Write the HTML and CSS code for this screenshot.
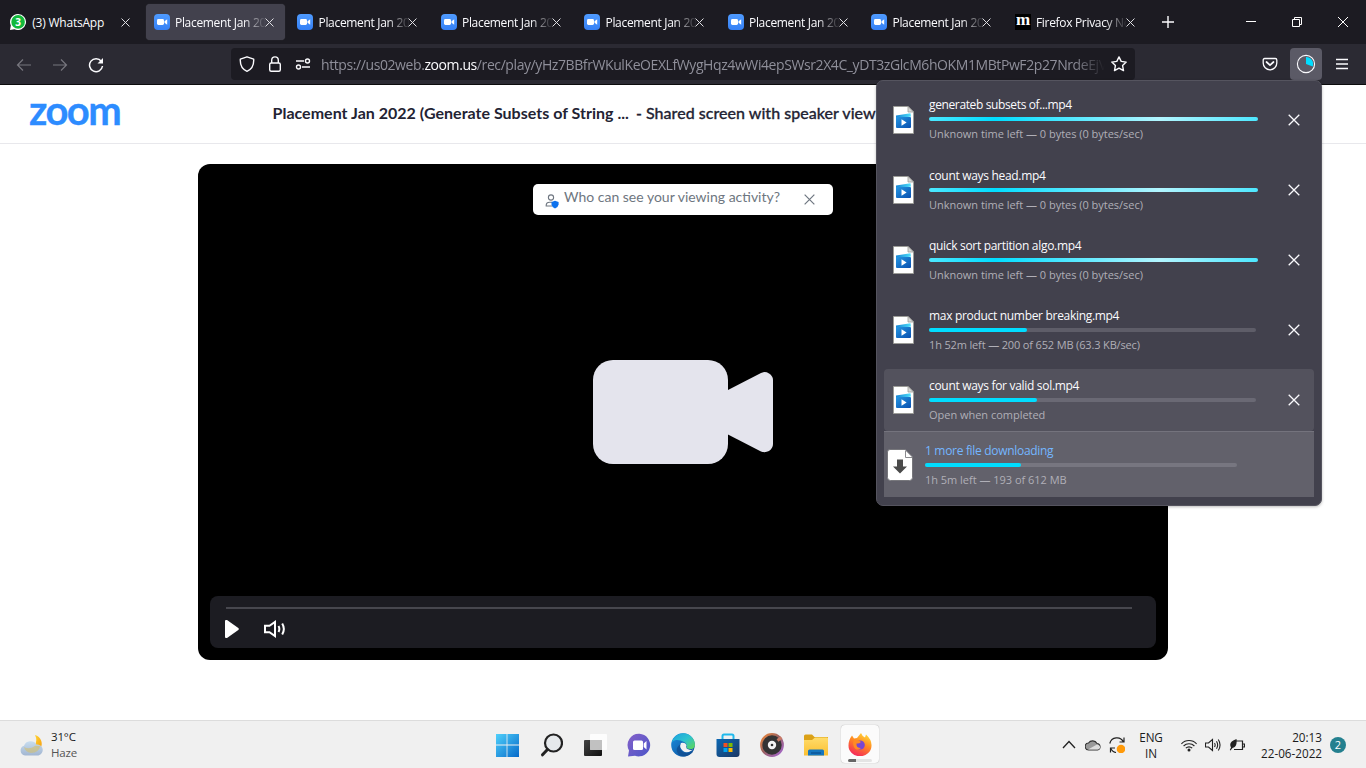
FILE: index.html
```
<!DOCTYPE html>
<html lang="en">
<head>
<meta charset="utf-8">
<title>Placement Jan 2022 - Zoom</title>
<link rel="stylesheet" href="styles.css">
</head>
<body>
<svg class="defs" width="0" height="0">
  <defs>
    <linearGradient id="gZoom" x1="0" y1="0" x2="0" y2="1"><stop offset="0" stop-color="#4f9bff"/><stop offset="1" stop-color="#3580f5"/></linearGradient>
    <linearGradient id="gWin" x1="0" y1="0" x2="1" y2="1"><stop offset="0" stop-color="#4fd0fb"/><stop offset="1" stop-color="#0669c9"/></linearGradient>
    <linearGradient id="gFilm" x1="0" y1="0" x2="1" y2="1"><stop offset="0" stop-color="#2496e3"/><stop offset="1" stop-color="#0a4fae"/></linearGradient>
    <linearGradient id="gClap" x1="0" y1="0" x2="1" y2="0"><stop offset="0" stop-color="#1583d3"/><stop offset="1" stop-color="#4fe0fb"/></linearGradient>
    <linearGradient id="gDark" x1="0" y1="0" x2="1" y2="1"><stop offset="0" stop-color="#444"/><stop offset="1" stop-color="#111"/></linearGradient>
    <linearGradient id="gChat" x1="0" y1="0" x2="1" y2="1"><stop offset="0" stop-color="#8561c9"/><stop offset="1" stop-color="#4b55c8"/></linearGradient>
    <linearGradient id="gEdgeTop" x1="0" y1="0" x2="1" y2="1"><stop offset="0" stop-color="#1c9fe0"/><stop offset=".5" stop-color="#2dc3cf"/><stop offset="1" stop-color="#62d84e"/></linearGradient>
    <linearGradient id="gEdgeLow" x1="0" y1="0" x2="1" y2="1"><stop offset="0" stop-color="#1b8ee0"/><stop offset="1" stop-color="#0b4a94"/></linearGradient>
    <linearGradient id="gStore" x1="0" y1="0" x2="1" y2="1"><stop offset="0" stop-color="#0b68b4"/><stop offset="1" stop-color="#1c3763"/></linearGradient>
    <linearGradient id="gDisc" x1="0" y1="0" x2="1" y2="1"><stop offset="0" stop-color="#f08a3c"/><stop offset=".45" stop-color="#9a615f"/><stop offset="1" stop-color="#a568d8"/></linearGradient>
    <linearGradient id="gFold" x1="0" y1="0" x2="0" y2="1"><stop offset="0" stop-color="#ffdc6b"/><stop offset="1" stop-color="#fbbf31"/></linearGradient>
    <linearGradient id="gFox" x1=".8" y1="0" x2=".3" y2="1"><stop offset="0" stop-color="#ffe03a"/><stop offset=".45" stop-color="#ff8a22"/><stop offset="1" stop-color="#f5245c"/></linearGradient>
    <linearGradient id="gMoon" x1="0" y1="0" x2="1" y2="1"><stop offset="0" stop-color="#ffd83a"/><stop offset="1" stop-color="#f79d0c"/></linearGradient>
    <linearGradient id="gHaze" x1="0" y1="0" x2="0" y2="1"><stop offset="0" stop-color="#c5dcf0"/><stop offset="1" stop-color="#9db2cf"/></linearGradient>
    <symbol id="fav" viewBox="0 0 16 16"><rect width="16" height="16" rx="4" fill="url(#gZoom)"/><rect x="3" y="5" width="7" height="6" rx="1.4" fill="#fff"/><path d="M10.5 7.2 13.2 5.3V10.7L10.5 8.8Z" fill="#fff"/></symbol>
    <symbol id="x" viewBox="0 0 12 12"><path d="M.7.7 11.3 11.3M11.3.7.7 11.3" stroke="currentColor" stroke-width="1.3" fill="none"/></symbol>
    <symbol id="file" viewBox="0 0 21 28">
      <path d="M.5.5H15L20.5 6V27.5H.5Z" fill="#fff" stroke="#9c9c98"/><path d="M15 .5V6H20.5Z" fill="#d8d8d6" stroke="#9c9c98" stroke-width=".8"/>
      <path d="M3 9.5 17.5 7.2 18 10.5 3 13Z" fill="url(#gClap)"/><rect x="3" y="11" width="15" height="11" rx="1" fill="url(#gFilm)"/><path d="M8.5 13.2 13.6 16.5 8.5 19.8Z" fill="#fff"/>
    </symbol>
  </defs>
</svg>

<div class="tabs">
  <div class="tab">
    <svg class="fav" viewBox="0 0 16 16"><path d="M8 0a8 8 0 1 1-3.5 15.2L0 16 .8 11.500A8 8 0 0 1 8 0Z" fill="#fff"/><circle cx="8.100" cy="7.900" r="6.800" fill="#12b93b"/></svg><span class="count">3</span>
    <span class="name whats">(3) WhatsApp</span><svg class="close"><use href="#x"/></svg></div>
  <div class="tab active"><svg class="fav"><use href="#fav"/></svg><span class="name">Placement Jan 2022</span><svg class="close"><use href="#x"/></svg></div>
  <div class="tab"><svg class="fav"><use href="#fav"/></svg><span class="name">Placement Jan 2022</span><svg class="close"><use href="#x"/></svg></div>
  <div class="tab"><svg class="fav"><use href="#fav"/></svg><span class="name">Placement Jan 2022</span><svg class="close"><use href="#x"/></svg></div>
  <div class="tab"><svg class="fav"><use href="#fav"/></svg><span class="name">Placement Jan 2022</span><svg class="close"><use href="#x"/></svg></div>
  <div class="tab"><svg class="fav"><use href="#fav"/></svg><span class="name">Placement Jan 2022</span><svg class="close"><use href="#x"/></svg></div>
  <div class="tab"><svg class="fav"><use href="#fav"/></svg><span class="name">Placement Jan 2022</span><svg class="close"><use href="#x"/></svg></div>
  <div class="tab"><span class="fav moz">m</span><span class="name">Firefox Privacy Notice</span><svg class="close"><use href="#x"/></svg></div>
  <svg class="plus" viewBox="0 0 12 12"><path d="M6 0V12M0 6H12" stroke="#fbfbfe" stroke-width="1.4"/></svg>
  <div class="winctl">
    <svg viewBox="0 0 10 10"><path d="M0 4.500H10" stroke="#fff"/></svg>
    <svg viewBox="0 0 10 10"><path d="M.5 2.500H7.500V9.500H.5ZM2.500 2.500V.5H9.500V7.500H7.500" fill="none" stroke="#fff"/></svg>
    <svg viewBox="0 0 10 10"><path d="M0 0 10 10M10 0 0 10" stroke="#fff"/></svg>
  </div>
</div>

<div class="toolbar">
  <div class="nav">
    <svg class="dim" viewBox="0 0 16 16"><path d="M15 8H1.500M7 2.500 1.500 8 7 13.500" fill="none" stroke="currentColor" stroke-width="1.200"/></svg>
    <svg class="dim" viewBox="0 0 16 16"><path d="M1 8H14.500M9 2.500 14.500 8 9 13.500" fill="none" stroke="currentColor" stroke-width="1.200"/></svg>
    <svg viewBox="0 0 16 16"><path d="M13.300 4.300A6.500 6.500 0 1 0 14.500 9" fill="none" stroke="currentColor" stroke-width="1.500"/><path d="M15 1V6.500H9.500Z" fill="currentColor"/></svg>
  </div>
  <div class="urlbar">
    <svg viewBox="0 0 16 16"><path d="M8 .8 14.700 3.200C15 9 12.500 13.500 8 15.300 3.500 13.500 1 9 1.300 3.200Z" fill="none" stroke="currentColor" stroke-width="1.400" stroke-linejoin="round"/></svg>
    <svg viewBox="0 0 16 16"><rect x="2.700" y="7" width="10.600" height="8.200" rx="1.500" fill="none" stroke="currentColor" stroke-width="1.400"/><path d="M4.700 7V4.200A3.300 3.300 0 0 1 11.300 4.200V7" fill="none" stroke="currentColor" stroke-width="1.400"/></svg>
    <svg viewBox="0 0 16 16"><g fill="none" stroke="currentColor" stroke-width="1.400"><circle cx="12.500" cy="5" r="2"/><circle cx="3.500" cy="11" r="2"/><path d="M1 5H9M7 11H15"/></g></svg>
    <span class="url">https://us02web.<b>zoom.us</b>/rec/play/yHz7BBfrWKulKeOEXLfWygHqz4wWi4epSWsr2X4C_yDT3zGlcM6hOKM1MBtPwF2p27NrdeEjV</span>
    <svg class="star" viewBox="0 0 16 16"><path d="M8 .9 10.200 5.400 15.200 6.100 11.600 9.600 12.500 14.600 8 12.200 3.500 14.600 4.400 9.600.8 6.100 5.800 5.400Z" fill="none" stroke="currentColor" stroke-width="1.400" stroke-linejoin="round"/></svg>
  </div>
  <div class="tools">
    <svg viewBox="0 0 16 16"><path d="M2.700 2.500H13.300Q14.800 2.500 14.800 4V7A6.800 6.800 0 0 1 1.200 7V4Q1.200 2.500 2.700 2.500Z" fill="none" stroke="currentColor" stroke-width="1.300"/><path d="M4.500 6 8 9.200 11.500 6" fill="none" stroke="currentColor" stroke-width="1.700" stroke-linecap="round"/></svg>
    <span class="dl"><svg viewBox="0 0 20 20"><circle cx="10" cy="10" r="8.600" fill="none" stroke="#fbfbfe" stroke-width="1.100"/><path d="M10 10V3A7 7 0 0 1 16.700 12.500Z" fill="#00ddff"/></svg></span>
    <svg viewBox="0 0 16 16"><path d="M2 3.500H14M2 8H14M2 12.500H14" stroke="currentColor" stroke-width="1.300"/></svg>
  </div>
</div>

<header class="head"><span class="logo">zoom</span><h1><span class="t1">Placement Jan 2022 (Generate Subsets of String ...</span><span class="t2">- Shared screen with speaker view</span></h1></header>

<main class="page">
  <section class="player">
    <div class="notice">
      <svg class="who" viewBox="0 0 15 15"><g fill="none" stroke="#6e7680" stroke-width="1.100"><circle cx="6" cy="3.500" r="2.600"/><path d="M7 12H1.200V11Q1.500 8.200 4.500 8.200H7"/></g><path d="M10 6.800 13.600 8V10.500Q13.300 13 10 14.500 6.700 13 6.500 10.500V8Z" fill="#0e72ed"/></svg>
      <span class="ask">Who can see your viewing activity?</span><svg class="shut"><use href="#x"/></svg>
    </div>
    <svg class="cam" viewBox="0 0 180 104"><rect width="135" height="104" rx="20" fill="#e4e4ed"/><path d="M134 30.500 168 13Q172 11 176 13.500 180 16 180 20V84Q180 88 176 91 172 93 168 91.500L134 74Z" fill="#e4e4ed"/></svg>
    <div class="controls">
      <div class="seek"></div>
      <div class="btns">
        <svg class="play" viewBox="0 0 14 18"><path d="M0 1Q0 0 1 0H2L13.300 8Q14.300 9 13.300 10L2 18H1Q0 18 0 17Z" fill="#fff"/></svg>
        <svg class="vol" viewBox="0 0 22 18"><g fill="none" stroke="#fff" stroke-width="2"><path d="M1 5.800H5.500L11 2V16L5.500 12.200H1Z"/><path d="M14.500 6Q16.200 9 14.500 12M18.200 3.500Q21.500 9 18.200 14.500"/></g></svg>
      </div>
    </div>
  </section>
</main>

<footer class="taskbar">
  <div class="weather">
    <svg viewBox="0 0 24 22"><path d="M15 0A9 9 0 0 1 20 14L14 12Q18 6 15 0Z" fill="url(#gMoon)"/><path d="M5 20.500A5 5 0 0 1 4 10.800 7 7 0 0 1 16.500 9.500 5.600 5.600 0 0 1 18.500 20.500Z" fill="url(#gHaze)" opacity=".93"/><path d="M4 12Q9 15 15 11L20 11Q19 18 11 18 5 17 4 12Z" fill="#d3bf70" opacity=".6"/></svg>
    <div><p class="deg">31°C</p><p class="haze">Haze</p></div>
  </div>
  <div class="apps">
    <span><svg viewBox="0 0 24 24"><path d="M1 1H11.600V11.600H1ZM12.400 1H24V11.600H12.400ZM1 12.400H11.600V24H1ZM12.400 12.400H24V24H12.400Z" fill="url(#gWin)"/></svg></span>
    <span><svg viewBox="0 0 24 24"><circle cx="14.500" cy="10" r="8.500" fill="#e6e9ec" stroke="#222" stroke-width="2.200"/><path d="M8.500 16.500 3.500 21.800" stroke="#222" stroke-width="3" stroke-linecap="round"/></svg></span>
    <span><svg viewBox="0 0 24 24"><rect x="1" y="7" width="18" height="16" rx="1" fill="url(#gDark)"/><rect x="7" y="1" width="17" height="16" rx="1" fill="#fff" opacity=".86"/><rect x="7" y="7" width="12" height="10" fill="#bbb" opacity=".85"/></svg></span>
    <span><svg viewBox="0 0 24 24"><path d="M12.500.8A11.300 11.300 0 1 1 8 22.700L1 23.500 2 17.500A11.300 11.300 0 0 1 12.500.8Z" fill="url(#gChat)"/><rect x="6" y="7.500" width="10" height="9.500" rx="1.500" fill="#fff"/><path d="M16.700 10.500 19.500 8V16.500L16.700 14Z" fill="#fff"/></svg></span>
    <span><svg viewBox="0 0 24 24"><circle cx="12" cy="12" r="11.800" fill="url(#gEdgeLow)"/><path d="M.8 9A11.800 11.800 0 0 1 24 12C23.500 16.500 19 17 15.500 15 16.500 12.500 15.500 10 13 9 9 6.500 4 6 .8 9Z" fill="url(#gEdgeTop)"/><path d="M10 10Q14 9 15.500 12 14.500 15 16.500 16 20 17.500 22.500 16.500 16 21 12 18 7.500 14 10 10Z" fill="#f1f1f1"/><path d="M9.500 11C7 17 13 22 19 19.500Q22 18 22 19 15 26 7.500 21.500 3 16 9.500 11Z" fill="#104e91" opacity=".8"/></svg></span>
    <span><svg viewBox="0 0 24 24"><path d="M6.500 6V3Q6.500 1.500 8 1.500H16Q17.500 1.500 17.500 3V6" fill="none" stroke="#20b9ec" stroke-width="2"/><path d="M.5 6H23.500V21Q23.500 24 20.500 24H3.500Q.5 24 .5 21Z" fill="url(#gStore)"/><path d="M7.500 10H11.500V14H7.500Z" fill="#f25022"/><path d="M12.500 10H16.500V14H12.500Z" fill="#7fba00"/><path d="M7.500 15H11.500V19H7.500Z" fill="#00a4ef"/><path d="M12.500 15H16.500V19H12.500Z" fill="#ffb900"/></svg></span>
    <span><svg viewBox="0 0 24 24"><circle cx="12" cy="12" r="10.800" fill="#343434" stroke="url(#gDisc)" stroke-width="2.200"/><circle cx="12" cy="12" r="4.200" fill="#f4f4f4"/><circle cx="12" cy="12" r="1.300" fill="#333"/><path d="M17.500 7.500 21.500 4.500" stroke="#c87a67" stroke-width="3"/></svg></span>
    <span><svg viewBox="0 0 24 24"><path d="M0 3Q0 1.500 1.500 1.500H8L10.500 4H24V9H0Z" fill="#dba117"/><path d="M0 7H8L11 4.500H23Q24 4.500 24 5.500V22.500H0Z" fill="url(#gFold)"/><path d="M4 22.500V18Q4 16.500 5.500 16.500H18.500Q20 16.500 20 18V22.500Z" fill="#1476bf"/><path d="M7 20H17" stroke="#0b5697" stroke-width="1.500"/></svg></span>
    <span class="cur"><svg viewBox="0 0 24 24"><path d="M4 3.500 6 6.500 9 6 13 1Q14 4 17 5.500L18 2.500Q24 8 23.500 14A11.500 10.500 0 0 1 .5 13.500Q.5 8 4 3.500Z" fill="url(#gFox)"/><circle cx="12.200" cy="13" r="4.600" fill="#7846d2"/><path d="M6 8Q10 7 13 10 11 12 8.500 11.500 8 16 13 16 9 19 6.500 16 4 12 6 8Z" fill="#ff8a25"/></svg><i></i></span>
  </div>
  <div class="tray">
    <svg viewBox="0 0 16 16"><path d="M2 11 8 4.500 14 11" fill="none" stroke="#222" stroke-width="1.300"/></svg>
    <svg viewBox="0 0 16 16"><path d="M4 13A3.500 3.500 0 0 1 3.500 6 5 5 0 0 1 12 6.500 3.300 3.300 0 0 1 12.500 13Z" fill="#999" stroke="#333" stroke-width="1.100"/><path d="M3 12.500 12 7.500Q15.500 8 15 11 14 12.500 12.500 12.500Z" fill="#ddd"/></svg>
    <svg viewBox="0 0 16 16"><g fill="none" stroke="#222" stroke-width="1.200"><path d="M.8 6.500A7.300 7.300 0 0 1 14.500 5M15 .5V5H10.500M1.500 15.500V11H6M1.500 11Q3.500 15 7 15.500"/></g><circle cx="12" cy="12" r="4.300" fill="#ff9a0a"/></svg>
    <div class="lang">ENG<br>IN</div>
    <svg viewBox="0 0 16 16"><g fill="none" stroke="#222" stroke-width="1.100"><path d="M.4 6.800A10.500 10.500 0 0 1 15.600 6.800M2.600 9A7.500 7.500 0 0 1 13.400 9M4.800 11.200A4.500 4.500 0 0 1 11.200 11.200"/></g><circle cx="8" cy="13" r="1.500" fill="#222"/></svg>
    <svg viewBox="0 0 16 16"><g fill="none" stroke="#222" stroke-width="1.100"><path d="M.5 6H3.500L7.500 2.500V13.500L3.500 10H.5ZM9.500 6Q10.800 8 9.500 10M11.500 4.200Q13.800 8 11.500 11.800M13.300 2.500Q16.800 8 13.300 13.500"/></g></svg>
    <svg viewBox="0 0 16 16"><path d="M6 4H13.500V12.500H5M14 7H15.500V10H14" fill="none" stroke="#222" stroke-width="1.200"/><path d="M7.500 2Q8.500 10 3.500 11L1.500 13.500.8 13 2 10.500Q-1 5 7.500 2Z" fill="#222"/></svg>
    <div class="clock">20:13<br>22-06-2022</div>
    <span class="badge">2</span>
  </div>
</footer>

<aside class="panel">
  <div class="item first"><svg class="doc"><use href="#file"/></svg><div class="info"><p class="fn">generateb subsets of...mp4</p><div class="bar wave"></div><p class="st">Unknown time left — 0 bytes (0 bytes/sec)</p></div><svg class="cancel"><use href="#x"/></svg></div>
  <div class="item"><svg class="doc"><use href="#file"/></svg><div class="info"><p class="fn">count ways head.mp4</p><div class="bar wave"></div><p class="st">Unknown time left — 0 bytes (0 bytes/sec)</p></div><svg class="cancel"><use href="#x"/></svg></div>
  <div class="item"><svg class="doc"><use href="#file"/></svg><div class="info"><p class="fn">quick sort partition algo.mp4</p><div class="bar wave"></div><p class="st">Unknown time left — 0 bytes (0 bytes/sec)</p></div><svg class="cancel"><use href="#x"/></svg></div>
  <div class="item"><svg class="doc"><use href="#file"/></svg><div class="info"><p class="fn">max product number breaking.mp4</p><div class="bar"><i style="width:98px"></i></div><p class="st rate">1h 52m left — 200 of 652 MB (63.3 KB/sec)</p></div><svg class="cancel"><use href="#x"/></svg></div>
  <div class="item hover"><svg class="doc"><use href="#file"/></svg><div class="info"><p class="fn">count ways for valid sol.mp4</p><div class="bar"><i style="width:108px"></i></div><p class="st">Open when completed</p></div><svg class="cancel"><use href="#x"/></svg></div>
  <div class="more">
    <svg class="down" viewBox="0 0 26 32"><path d="M3 .5H18L25.500 8V28.500Q25.500 31.500 22.500 31.500H3.500Q.5 31.500.5 28.500V3Q.5.5 3 .5Z" fill="#fff" stroke="#77777c"/><path d="M18.500 2V8.500H25" fill="none" stroke="#8a8a8e"/><path d="M10 10.500H16V17.500H20L13 24.500 6 17.500H10Z" fill="#4a4a4a"/></svg>
    <div class="info"><p class="fn">1 more file downloading</p><div class="bar"><i style="width:96px"></i></div><p class="st">1h 5m left — 193 of 612 MB</p></div>
  </div>
</aside>
</body>
</html>
```
FILE: styles.css
```
* { box-sizing: border-box; }
body { margin: 0; width: 1366px; height: 768px; overflow: hidden; background: #fff; display: flex; flex-direction: column; font-family: "Open Sans", "Noto Sans", sans-serif; }
p, h1 { margin: 0; }
svg { display: block; flex: none; }
.defs { position: absolute; }

.tabs { height: 44px; flex: none; background: #1c1b22; display: flex; align-items: center; padding-left: 2px; }
.tab { width: 139px; height: 36px; margin-right: 4.5px; flex: none; display: flex; align-items: center; padding-left: 8px; border-radius: 4px; color: #fbfbfe; position: relative; }
.tab.active { background: #42414d; box-shadow: 0 0 1px #8886; }
.fav { width: 16px; height: 16px; flex: none; }
.count { position: absolute; left: 8px; top: 10px; width: 16px; text-align: center; font: bold 10px/16px "Open Sans", sans-serif; color: #fff; }
.moz { background: #000; color: #fff; font: bold 17px/12px "Liberation Serif", serif; text-align: center; letter-spacing: -1px; }
.name { margin-left: 5.500px; width: 91px; padding-top: 2px; font-size: 12px; letter-spacing: -.32px; line-height: 18px; white-space: nowrap; overflow: hidden; -webkit-mask-image: linear-gradient(90deg, #000 68px, transparent 91px); mask-image: linear-gradient(90deg, #000 68px, transparent 91px); }
.name.whats { padding-left: .8px; letter-spacing: -.22px; -webkit-mask-image: none; mask-image: none; }
.close { width: 9px; height: 9px; margin-left: -1.500px; color: #e4e4e8; }
.plus { width: 12px; height: 12px; margin-left: 11.500px; }
.winctl { margin-left: auto; display: flex; gap: 36px; padding-right: 18px; }
.winctl svg { width: 10px; height: 10px; }

.toolbar { height: 41px; flex: none; background: #2b2a33; border-bottom: 1px solid #0c0c0d; display: flex; align-items: flex-start; color: #fbfbfe; }
.nav { width: 231px; padding: 13px 0 0 16px; display: flex; gap: 20px; }
.nav svg, .urlbar svg, .tools > svg { width: 16px; height: 16px; }
.nav .dim { color: #77767e; }
.urlbar { width: 904px; height: 32px; margin-top: 4px; border-radius: 4px; background: #1c1b22; display: flex; align-items: center; padding-left: 8px; gap: 12px; }
.url { width: 784px; margin-left: -2px; padding-top: 2px; white-space: nowrap; overflow: hidden; font-size: 14px; line-height: 20px; letter-spacing: -.41px; color: #8f8f9a; -webkit-mask-image: linear-gradient(90deg, #000 752px, transparent 784px); mask-image: linear-gradient(90deg, #000 752px, transparent 784px); }
.url b { font-weight: 400; color: #fbfbfe; }
.urlbar .star { margin-left: -6px; }
.tools { display: flex; align-items: center; height: 32px; margin: 4px 0 0 127px; }
.dl { width: 32px; height: 32px; margin: 0 12px; border-radius: 4px; background: #5b5a66; display: grid; place-items: center; }
.dl svg { width: 20px; height: 20px; }

.head { height: 59px; flex: none; border-bottom: 1px solid #e8e8ec; display: flex; align-items: center; padding-left: 29px; font-family: Lato, sans-serif; }
.logo { width: 243.500px; font: 700 40px/40px Lato, sans-serif; letter-spacing: -1.600px; color: #2d8cff; -webkit-text-stroke: .3px #2d8cff; padding-bottom: 9px; }
.head h1 { font-size: 16px; line-height: 20px; white-space: pre; color: #232333; padding-bottom: 3px; }
.t1 { font-weight: 700; letter-spacing: .02px; }
.t2 { font-weight: 500; -webkit-text-stroke: .3px #232333; letter-spacing: .03px; margin-left: 7px; }

.page { flex: 1; padding: 20px 198px 0; }
.player { width: 970px; height: 496px; background: #000; border-radius: 12px; display: flex; flex-direction: column; align-items: center; padding: 20px 12px 12px; }
.notice { width: 300px; height: 31px; background: #fff; border-radius: 5px; display: flex; padding-left: 12px; }
.who { width: 15px; height: 15px; margin-top: 10px; }
.ask { width: 229px; margin-left: 4px; font: 14px/25px Lato, sans-serif; color: #6e7680; white-space: nowrap; }
.shut { width: 11px; height: 11px; margin: 10px 0 0 11px; color: #6e7680; }
.cam { width: 180px; height: 104px; margin-top: 145px; }
.controls { width: 946px; height: 52px; margin-top: auto; border-radius: 8px; background: #1c1c22; padding: 11px 24px 0 16px; }
.seek { height: 2px; background: #47474e; }
.btns { display: flex; align-items: center; gap: 25px; margin: 11px 0 0 -1px; }
.play { width: 14px; height: 18px; }
.vol { width: 22px; height: 18px; }

.taskbar { height: 48px; flex: none; background: #f0f0f0; border-top: 1px solid #dcdcdc; display: flex; color: #1b1b1b; }
.weather { width: 485px; padding: 0 0 0 20px; display: flex; align-items: center; gap: 7px; font-size: 11.500px; line-height: 16px; letter-spacing: -.15px; }
.weather svg { width: 24px; height: 22px; margin-top: 2px; }
.haze { color: #555; }
.apps { display: flex; }
.apps span { width: 44.100px; height: 47px; display: grid; place-items: center; position: relative; }
.apps svg { width: 24px; height: 24px; }
.apps .cur { width: 38px; height: 38px; margin: 4px 0 0 3px; background: #fbfbfb; border-radius: 4px; box-shadow: 0 0 1px #999; }
.cur i { position: absolute; left: 7px; bottom: 1px; width: 24px; height: 3px; border-radius: 2px; background: linear-gradient(90deg, #666 8px, #e4e4e4 8px); }
.tray { margin-left: auto; display: flex; align-items: center; padding-right: 20px; gap: 8px; font-size: 11.700px; line-height: 16px; }
.tray svg { width: 16px; height: 16px; }
.lang { width: 36px; margin-right: 4px; text-align: center; letter-spacing: -.1px; }
.clock { width: 69px; text-align: right; white-space: nowrap; }
.badge { width: 16px; height: 16px; border-radius: 8px; background: #24808f; color: #fff; text-align: center; font-size: 11px; line-height: 16px; }

.panel { position: absolute; left: 876px; top: 80px; width: 446px; height: 426px; background: #42414d; border: 1px solid #55545f; border-radius: 7px; padding: 8px 7px; display: flex; flex-direction: column; box-shadow: 0 1px 3px #0004; }
.item { height: 62px; margin-bottom: 8px; flex: none; border-radius: 4px; display: flex; align-items: center; padding-left: 9px; }
.item.hover { background: #53525d; margin-bottom: 0; }
.doc { width: 21px; height: 28px; }
.item .info { width: 329px; margin: 1px 0 0 15px; }
.item.first .info { margin-top: -1px; }
.fn { font-size: 12px; line-height: 16px; color: #fbfbfe; letter-spacing: -.31px; white-space: nowrap; }
.first .fn { letter-spacing: -.37px; }
.bar { width: 327px; height: 4px; margin: 4px 0 5px; border-radius: 2px; background: #5e5d68; }
.hover .bar { background: #6a6974; }
.bar i { display: block; height: 4px; border-radius: 2px; background: #00ddff; }
.bar.wave { width: 329px; background: linear-gradient(90deg, #4de7ff, #00ddff 20%, #b3f5ff 70%, #4de7ff); }
.st { font-size: 11px; line-height: 16px; color: #b0afb7; white-space: nowrap; letter-spacing: -.02px; }
.st.rate { letter-spacing: -.15px; }
.cancel { width: 12px; height: 12px; margin-left: 30px; color: #fbfbfe; }
.more { height: 66px; flex: none; background: #62616b; border-top: 1px solid #74737d; display: flex; align-items: center; padding-left: 3px; }
.down { width: 26px; height: 32px; margin-top: 1px; }
.more .info { margin-left: 12px; margin-top: 2px; }
.more .fn { color: #74b6ff; }
.more .bar { width: 312px; background: #777680; }
```
